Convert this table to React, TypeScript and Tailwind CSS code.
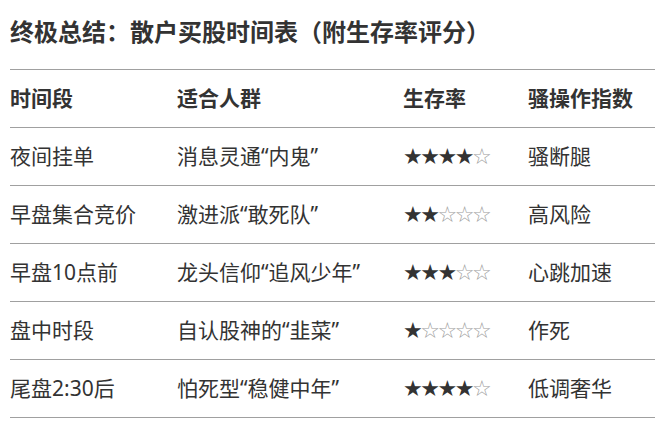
import React from "react";

const rows = [
  { time: "夜间挂单", who: "消息灵通“内鬼”", rate: 4, risk: "骚断腿" },
  { time: "早盘集合竞价", who: "激进派“敢死队”", rate: 2, risk: "高风险" },
  { time: "早盘10点前", who: "龙头信仰“追风少年”", rate: 3, risk: "心跳加速" },
  { time: "盘中时段", who: "自认股神的“韭菜”", rate: 1, risk: "作死" },
  { time: "尾盘2:30后", who: "怕死型“稳健中年”", rate: 4, risk: "低调奢华" },
];

const Stars = ({ n }: { n: number }) => (
  <span className="font-['DejaVu_Sans',sans-serif] text-[22px] tracking-[-2.5px] leading-none">
    <span className="text-[#333333]">{"★".repeat(n)}</span>
    <span className="text-[#a0a0a0]">{"☆".repeat(5 - n)}</span>
  </span>
);

export default function App() {
  return (
    <div className="w-[666px] h-[424px] bg-white px-[10px] pt-[16px] text-[#333333] font-['Noto_Sans','Noto_Sans_CJK_SC',sans-serif]">
      <h1 className="text-[24px] leading-[32px] font-bold">
        终极总结：散户买股时间表（附生存率评分）
      </h1>

      <div className="mt-[21px] w-[645px] border-t border-[#a0a0a0]">
        <div className="grid grid-cols-[167px_226px_125px_1fr] h-[58px] items-center border-b border-[#a0a0a0] text-[21px] font-bold">
          <div>时间段</div>
          <div>适合人群</div>
          <div>生存率</div>
          <div>骚操作指数</div>
        </div>

        {rows.map((r) => (
          <div
            key={r.time}
            className="grid grid-cols-[167px_226px_125px_1fr] h-[58px] items-center border-b border-[#a0a0a0] text-[21px]"
          >
            <div>{r.time}</div>
            <div>{r.who}</div>
            <div>
              <Stars n={r.rate} />
            </div>
            <div>{r.risk}</div>
          </div>
        ))}
      </div>
    </div>
  );
}
